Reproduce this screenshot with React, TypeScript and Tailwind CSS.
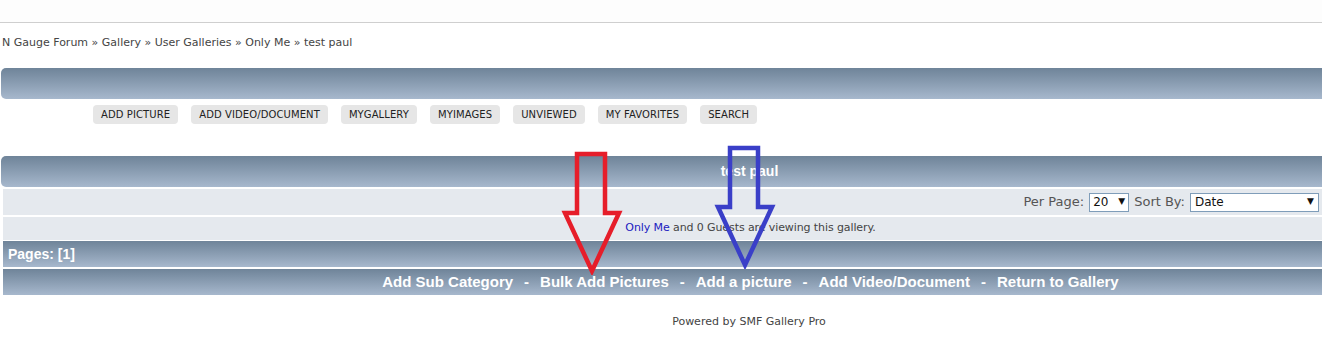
const bar = 'bg-gradient-to-b from-[#6f8499] to-[#a7b8cd]';

const buttons = ['ADD PICTURE', 'ADD VIDEO/DOCUMENT', 'MYGALLERY', 'MYIMAGES', 'UNVIEWED', 'MY FAVORITES', 'SEARCH'];
const links = ['Add Sub Category', 'Bulk Add Pictures', 'Add a picture', 'Add Video/Document', 'Return to Gallery'];

function Arrow({ color }: { color: string }) {
  return (
    <svg width="62" height="124" viewBox="0 0 62 124" fill="none">
      <path
        d="M16 3 H44 V62 H58 L31 120 L4 62 H16 Z"
        stroke={color}
        strokeWidth="4.5"
        strokeLinejoin="miter"
      />
    </svg>
  );
}

export default function App() {
  return (
    <div className="relative w-[1322px] h-[350px] overflow-hidden bg-white font-['DejaVu_Sans',Verdana,sans-serif] text-[#333]">
      <div className="h-[23px] bg-[#fdfdfd] border-b border-[#cfcfcf]" />

      <div className="pl-[2px] pt-[12px] h-[45px] text-[11px] text-[#444]">
        N Gauge Forum » Gallery » User Galleries » Only Me » test paul
      </div>

      <div className={`ml-[1px] h-[31px] rounded-l-[5px] ${bar}`} />

      <div className="flex gap-[13px] pl-[93px] pt-[6px] h-[57px]">
        {buttons.map((b) => (
          <span
            key={b}
            className="h-[19px] px-[8px] flex items-center rounded-[4px] bg-[#e6e6e6] text-[10px] text-[#222] tracking-[0.1px]"
          >
            {b}
          </span>
        ))}
      </div>

      <div className={`ml-[1px] h-[31px] rounded-l-[5px] ${bar} flex items-center justify-center pl-[176px] font-['Liberation_Sans',Arial,sans-serif] font-bold text-[14px] text-white`}>
        test paul
      </div>

      <div className="ml-[3px] mt-[2px] h-[26px] bg-[#e5e9ee] flex items-center justify-end gap-[5px] pr-[3px] text-[13px] text-[#555]">
        <span>Per Page:</span>
        <span className="h-[19px] w-[40px] border border-[#7f9db9] bg-white flex items-center justify-between px-[3px] text-[12px] text-[#111]">
          20<span className="text-[9px]">▼</span>
        </span>
        <span>Sort By:</span>
        <span className="h-[19px] w-[129px] border border-[#7f9db9] bg-white flex items-center justify-between px-[4px] text-[12px] text-[#111]">
          Date<span className="text-[9px]">▼</span>
        </span>
      </div>

      <div className="ml-[3px] mt-[2px] h-[23px] bg-[#e5e9ee] flex items-center justify-center pl-[176px] text-[11px] tracking-[-0.1px] text-[#444]">
        <span className="text-[#2020c0]">Only Me</span>&nbsp;and 0 Guests are viewing this gallery.
      </div>

      <div className={`ml-[3px] mt-[1px] h-[26px] ${bar} flex items-center pl-[5px] font-['Liberation_Sans',Arial,sans-serif] font-bold text-[14px] text-white`}>
        Pages: [1]
      </div>

      <div className={`ml-[3px] mt-[2px] h-[26px] ${bar} flex items-center justify-center pl-[176px] font-['Liberation_Sans',Arial,sans-serif] font-bold text-[15px] text-white`}>
        {links.map((l, i) => (
          <span key={l} className="flex items-center">
            {i > 0 && <span className="mx-[11px]">-</span>}
            {l}
          </span>
        ))}
      </div>

      <div className="pt-[19px] pl-[176px] text-center text-[11px] text-[#444]">Powered by SMF Gallery Pro</div>

      <div className="absolute left-[561px] top-[151px]">
        <Arrow color="#e61e2a" />
      </div>
      <div className="absolute left-[714px] top-[145px]">
        <Arrow color="#3a3fc8" />
      </div>
    </div>
  );
}
